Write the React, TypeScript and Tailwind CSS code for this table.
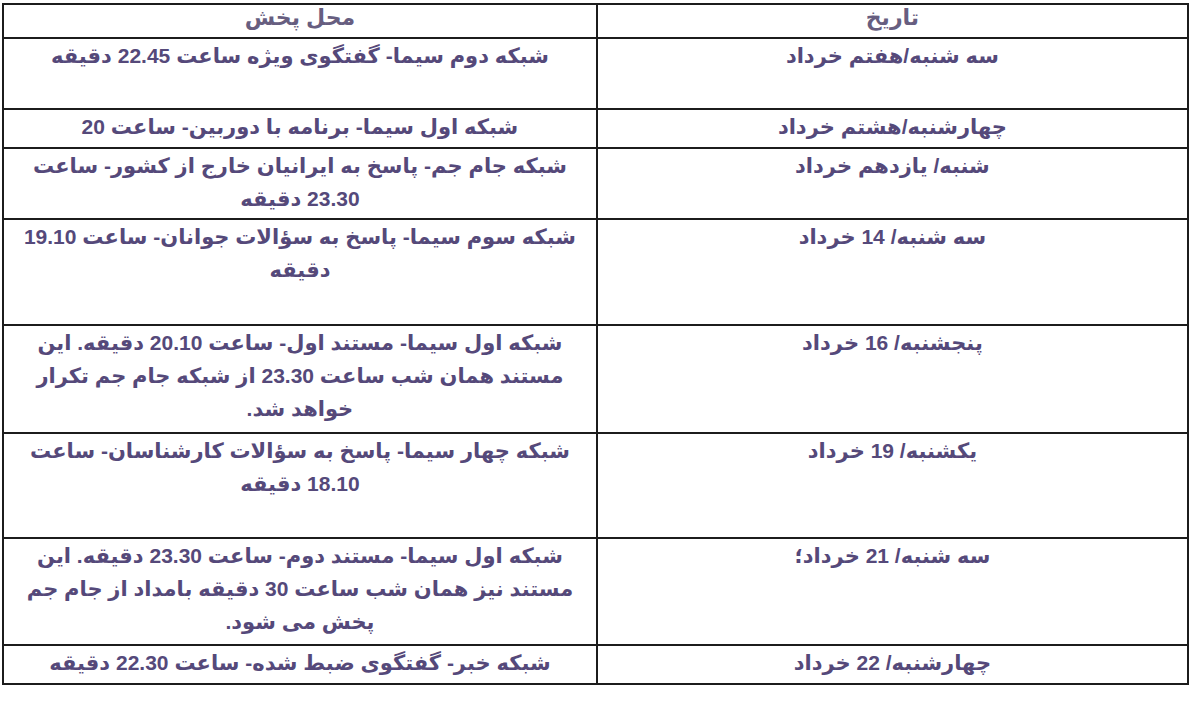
import React from "react";

type Row = { date: string; place: string[]; h: number };

const rows: Row[] = [
  { date: "سه شنبه/هفتم خرداد", place: ["شبکه دوم سیما- گفتگوی ویژه ساعت 22.45 دقیقه"], h: 71 },
  { date: "چهارشنبه/هشتم خرداد", place: ["شبکه اول سیما- برنامه با دوربین- ساعت 20"], h: 39 },
  { date: "شنبه/ یازدهم خرداد", place: ["شبکه جام جم- پاسخ به ایرانیان خارج از کشور- ساعت", "23.30 دقیقه"], h: 71 },
  { date: "سه شنبه/ 14 خرداد", place: ["شبکه سوم سیما- پاسخ به سؤالات جوانان- ساعت 19.10", "دقیقه"], h: 106 },
  {
    date: "پنجشنبه/ 16 خرداد",
    place: ["شبکه اول سیما- مستند اول- ساعت 20.10 دقیقه. این", "مستند همان شب ساعت 23.30 از شبکه جام جم تکرار", "خواهد شد."],
    h: 108,
  },
  { date: "یکشنبه/ 19 خرداد", place: ["شبکه چهار سیما- پاسخ به سؤالات کارشناسان- ساعت", "18.10 دقیقه"], h: 105 },
  {
    date: "سه شنبه/ 21 خرداد؛",
    place: ["شبکه اول سیما- مستند دوم- ساعت 23.30 دقیقه. این", "مستند نیز همان شب ساعت 30 دقیقه بامداد از جام جم", "پخش می شود."],
    h: 107,
  },
  { date: "چهارشنبه/ 22 خرداد", place: ["شبکه خبر- گفتگوی ضبط شده- ساعت 22.30 دقیقه"], h: 39 },
];

export default function App() {
  return (
    <div
      className="w-[1200px] h-[708px] bg-white pt-[3px] pl-[2px]"
      style={{ fontFamily: '"Liberation Sans", "DejaVu Sans", sans-serif' }}
    >
      <table dir="rtl" className="w-[1187px] border-collapse border-2 border-[#1c1c1c] text-[#55497a] font-bold text-[21px] leading-[33px]">
        <thead>
          <tr className="h-[34px]">
            <th className="w-[593px] border-2 border-[#1c1c1c] align-middle text-center font-bold text-[#675e80] text-[22px] leading-[24px] p-0 pb-[6px]">تاریخ</th>
            <th className="w-[594px] border-2 border-[#1c1c1c] align-middle text-center font-bold text-[#675e80] text-[22px] leading-[24px] p-0 pb-[6px]">محل پخش</th>
          </tr>
        </thead>
        <tbody>
          {rows.map((r, i) => (
            <tr key={i} style={{ height: r.h }}>
              <td className="border-2 border-[#1c1c1c] align-top text-center p-0">{r.date}</td>
              <td className="border-2 border-[#1c1c1c] align-top text-center p-0">
                {r.place.map((l, j) => (
                  <div key={j} className="whitespace-nowrap">
                    {l}
                  </div>
                ))}
              </td>
            </tr>
          ))}
        </tbody>
      </table>
    </div>
  );
}
